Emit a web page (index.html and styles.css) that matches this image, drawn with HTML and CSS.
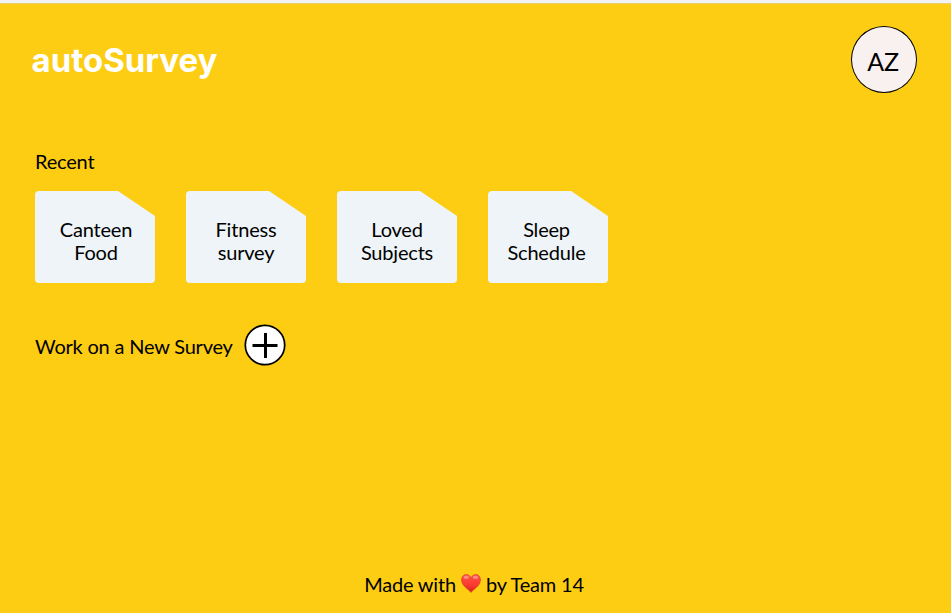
FILE: index.html
```html
<!DOCTYPE html>
<html lang="en">
<head>
<meta charset="utf-8">
<title>autoSurvey</title>
<link rel="stylesheet" href="styles.css">
</head>
<body>
<header class="header">
  <h1 class="brand">autoSurvey</h1>
  <div class="avatar">AZ</div>
</header>
<main class="main">
  <h2 class="label">Recent</h2>
  <div class="cards">
    <a class="card"><svg class="sheet" viewBox="0 0 120 92"><path d="M4 0H83L120 25V88a4 4 0 0 1-4 4H4a4 4 0 0 1-4-4V4a4 4 0 0 1 4-4Z"/></svg><span class="name name-first">Canteen<br>Food</span></a>
    <a class="card"><svg class="sheet" viewBox="0 0 120 92"><path d="M4 0H83L120 25V88a4 4 0 0 1-4 4H4a4 4 0 0 1-4-4V4a4 4 0 0 1 4-4Z"/></svg><span class="name">Fitness<br>survey</span></a>
    <a class="card"><svg class="sheet" viewBox="0 0 120 92"><path d="M4 0H83L120 25V88a4 4 0 0 1-4 4H4a4 4 0 0 1-4-4V4a4 4 0 0 1 4-4Z"/></svg><span class="name">Loved<br>Subjects</span></a>
    <a class="card"><svg class="sheet" viewBox="0 0 120 92"><path d="M4 0H83L120 25V88a4 4 0 0 1-4 4H4a4 4 0 0 1-4-4V4a4 4 0 0 1 4-4Z"/></svg><span class="name name-last">Sleep<br>Schedule</span></a>
  </div>
  <div class="new">
    <span class="prompt">Work on a New Survey</span>
    <svg class="plus" viewBox="0 0 42 42"><circle cx="21" cy="21" r="19.7"/><path d="M21.500 9V34M8.500 21.500H33.500"/></svg>
  </div>
</main>
<footer class="footer">
  <span>Made with</span>
  <svg class="heart" viewBox="0 0 20 19"><defs><linearGradient id="red" x2="0" y2="1"><stop offset="0" stop-color="#ff5347"/><stop offset=".6" stop-color="#f8392f"/><stop offset="1" stop-color="#d3221b"/></linearGradient></defs><path fill="url(#red)" stroke="#d9352c" stroke-width=".5" d="M10 18.500C8.500 16 .5 12 .5 6C.5 2.500 2.700 .5 5.300 .5C7.500 .5 9.300 1.800 10 4C10.700 1.800 12.500 .5 14.700 .5C17.300 .5 19.500 2.500 19.500 6C19.500 12 11.500 16 10 18.500Z"/><ellipse cx="5.300" cy="3.300" rx="2.800" ry="1.600" fill="#ff9b91" opacity=".8"/><ellipse cx="14.500" cy="3.300" rx="2.800" ry="1.600" fill="#ff9b91" opacity=".8"/></svg>
  <span>by Team 14</span>
</footer>
</body>
</html>
```
FILE: styles.css
```css
* { box-sizing: border-box; }
body {
  margin: 0;
  height: 613px;
  display: flex;
  flex-direction: column;
  background: #fdcd13;
  border-top: 3px solid #f2f2f2;
  box-shadow: inset 0 1px 0 #ecd06a;
  font: 20px/23px Lato, sans-serif;
  letter-spacing: -0.2px;
  color: #000;
  overflow: hidden;
}
.header {
  display: flex;
  justify-content: space-between;
  padding: 23px 34.5px 0 31.5px;
}
.brand {
  margin: 14px 0 0;
  font: 700 33px/40px Inter, sans-serif;
  letter-spacing: 0;
  color: #fff;
}
.avatar {
  width: 66px;
  height: 67px;
  padding-right: 1px;
  border: 1.5px solid #000;
  border-radius: 50%;
  background: #f9f1ef;
  font-size: 25px;
  line-height: 68px;
  text-align: center;
}
.main { padding: 58px 35px 0; }
.label { margin: -1px 0 18px; font-size: 20px; font-weight: 400; }
.cards { display: flex; gap: 31px; }
.card { display: grid; width: 120px; height: 92px; }
.sheet { grid-area: 1 / 1; width: 120px; height: 92px; fill: #eef4f8; }
.name { grid-area: 1 / 1; padding-top: 27px; text-align: center; }
.name-first { padding-left: 2px; }
.name-last { padding-right: 3px; }
.new { display: flex; align-items: center; gap: 11px; margin-top: 41px; }
.prompt { padding-top: 2px; }
.plus { width: 42px; height: 42px; fill: #fff; stroke: #000; stroke-width: 1.7; }
.plus path { stroke-width: 3; }
.footer {
  display: flex;
  justify-content: center;
  gap: 5px;
  margin: auto 3px 17px 0;
}
.heart { width: 20px; height: 19px; margin-top: 1px; }
```
